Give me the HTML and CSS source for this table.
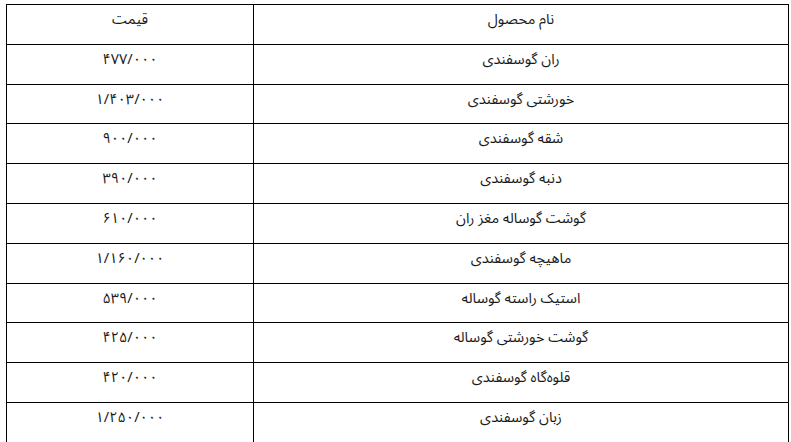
FILE: index.html
```html
<!DOCTYPE html>
<html lang="fa" dir="rtl">
<head>
<meta charset="utf-8">
<link rel="stylesheet" href="styles.css">
</head>
<body>
<div class="wrap">
<table class="prices">
<thead>
<tr><th class="name">نام محصول</th><th class="price">قیمت</th></tr>
</thead>
<tbody>
<tr><td class="name">ران گوسفندی</td><td class="price">۴۷۷/۰۰۰</td></tr>
<tr><td class="name">خورشتی گوسفندی</td><td class="price">۱/۴۰۳/۰۰۰</td></tr>
<tr><td class="name">شقه گوسفندی</td><td class="price">۹۰۰/۰۰۰</td></tr>
<tr><td class="name">دنبه گوسفندی</td><td class="price">۳۹۰/۰۰۰</td></tr>
<tr><td class="name">گوشت گوساله مغز ران</td><td class="price">۶۱۰/۰۰۰</td></tr>
<tr><td class="name">ماهیچه گوسفندی</td><td class="price">۱/۱۶۰/۰۰۰</td></tr>
<tr><td class="name">استیک راسته گوساله</td><td class="price">۵۳۹/۰۰۰</td></tr>
<tr><td class="name">گوشت خورشتی گوساله</td><td class="price">۴۲۵/۰۰۰</td></tr>
<tr><td class="name">قلوه‌گاه گوسفندی</td><td class="price">۴۲۰/۰۰۰</td></tr>
<tr><td class="name">زبان گوسفندی</td><td class="price">۱/۲۵۰/۰۰۰</td></tr>
</tbody>
</table>
</div>
</body>
</html>
```

FILE: styles.css
```css
html, body {
  margin: 0;
  padding: 0;
  background: #ffffff;
}
body {
  font-family: "Noto Sans Arabic", "DejaVu Sans", sans-serif;
  color: #1a1a1a;
}
.wrap {
  padding: 4px 2px 0 7px;
}
.prices {
  border-collapse: collapse;
  width: 782px;
  table-layout: fixed;
}
.prices th,
.prices td {
  border: 1px solid #000000;
  height: 39.8px;
  box-sizing: border-box;
  padding: 5px 4px 0;
  vertical-align: top;
  text-align: center;
  font-size: 14.5px;
  font-weight: normal;
  line-height: 20px;
}
.prices .name {
  width: 535px;
}
.prices .price {
  width: 247px;
}
```
